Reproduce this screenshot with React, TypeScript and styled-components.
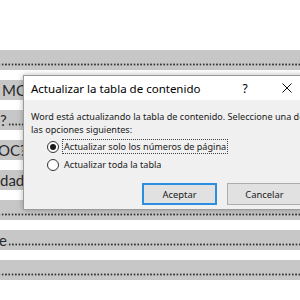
import React from "react";
import styled, { createGlobalStyle } from "styled-components";

const GlobalStyle = createGlobalStyle`
  html, body { margin: 0; padding: 0; background: #ffffff; }
  body { width: 300px; height: 300px; overflow: hidden; }
`;

const Page = styled.div`
  position: relative;
  width: 300px;
  height: 300px;
  overflow: hidden;
  background: #ffffff;
  box-sizing: border-box;
  padding-top: 50px;
  display: flex;
  flex-direction: column;
  gap: 10px;
`;

const Band = styled.div`
  height: 20px;
  background: #c7c7c7;
  display: flex;
  align-items: flex-end;
  overflow: hidden;
  white-space: nowrap;
`;

const DocText = styled.span<{ $shift: number }>`
  font-family: Lato, "Liberation Sans", sans-serif;
  font-size: 15px;
  line-height: 20px;
  color: #2a2a2a;
  margin-left: ${(p) => p.$shift}px;
  flex: none;
`;

const Leader = styled.span`
  flex: 1;
  align-self: stretch;
  background-image: radial-gradient(circle, #333 0.9px, transparent 1.2px);
  background-size: 3.3px 3px;
  background-repeat: repeat-x;
  background-position: 1px 13px;
`;

const Dialog = styled.div`
  position: absolute;
  left: 23px;
  top: 75px;
  width: 286px;
  height: 135px;
  box-sizing: border-box;
  background: #f0f0f0;
  border: 1px solid #9a9a9a;
  box-shadow: 0 0 6px rgba(0, 0, 0, 0.28);
  display: flex;
  flex-direction: column;
  font-family: "Noto Sans", "Open Sans", sans-serif;
  color: #1a1a1a;
`;

const TitleBar = styled.div`
  height: 24px;
  background: #ffffff;
  display: flex;
  align-items: center;
  padding-left: 7px;
`;

const Title = styled.div`
  flex: 1;
  font-size: 11.5px;
  color: #000;
  white-space: nowrap;
`;

const CaptionButton = styled.div`
  width: 42px;
  height: 24px;
  display: flex;
  align-items: center;
  justify-content: center;
  font-size: 12px;
  color: #000;
`;

const Body = styled.div`
  flex: 1;
  padding: 10px 0 0 7px;
  display: flex;
  flex-direction: column;
`;

const Message = styled.div`
  font-size: 9.1px;
  line-height: 13px;
  white-space: nowrap;
  color: #1a1a1a;
`;

const Options = styled.div`
  margin-top: 4px;
  padding-left: 16px;
  display: flex;
  flex-direction: column;
  gap: 5px;
`;

const Option = styled.label`
  display: flex;
  align-items: center;
  gap: 4px;
  height: 13px;
  font-size: 9.1px;
  white-space: nowrap;
`;

const Radio = styled.span<{ $checked?: boolean }>`
  width: 12px;
  height: 12px;
  box-sizing: border-box;
  border-radius: 50%;
  border: 1px solid #333;
  background: #fff;
  display: flex;
  align-items: center;
  justify-content: center;
  &::after {
    content: "";
    width: 6px;
    height: 6px;
    border-radius: 50%;
    background: ${(p) => (p.$checked ? "#1a1a1a" : "transparent")};
  }
`;

const Label = styled.span<{ $focused?: boolean }>`
  padding: 0 1px;
  line-height: 13px;
  outline: ${(p) => (p.$focused ? "1px dotted #444" : "none")};
`;

const Buttons = styled.div`
  margin-top: auto;
  margin-bottom: 4px;
  padding-right: 6px;
  display: flex;
  justify-content: flex-end;
  gap: 10px;
`;

const Button = styled.div<{ $primary?: boolean }>`
  width: 75px;
  height: 22px;
  box-sizing: border-box;
  background: #e1e1e1;
  border: ${(p) => (p.$primary ? "2px solid #2d8ee0" : "1px solid #adadad")};
  display: flex;
  align-items: center;
  justify-content: center;
  font-size: 9.4px;
  color: #1a1a1a;
`;

const rows: { text?: string; shift: number; leader: boolean }[] = [
  { shift: 0, leader: true },
  { text: "MC", shift: 2, leader: false },
  { text: "? ", shift: 0, leader: true },
  { text: "OC?", shift: -2, leader: false },
  { text: "dad", shift: 0, leader: false },
  { shift: 0, leader: true },
  { text: "e", shift: -1, leader: true },
  { shift: 0, leader: true },
];

export default function App() {
  return (
    <>
      <GlobalStyle />
      <Page>
        {rows.map((r, i) => (
          <Band key={i}>
            {r.text && <DocText $shift={r.shift}>{r.text}</DocText>}
            {r.leader && <Leader />}
          </Band>
        ))}
        <Dialog>
          <TitleBar>
            <Title>Actualizar la tabla de contenido</Title>
            <CaptionButton>?</CaptionButton>
            <CaptionButton>
              <svg width="10" height="10" viewBox="0 0 10 10">
                <path d="M0.5 0.5 L9.5 9.5 M9.5 0.5 L0.5 9.5" stroke="#111" strokeWidth="1" />
              </svg>
            </CaptionButton>
          </TitleBar>
          <Body>
            <Message>Word está actualizando la tabla de contenido. Seleccione una de</Message>
            <Message>las opciones siguientes:</Message>
            <Options>
              <Option>
                <Radio $checked />
                <Label $focused>Actualizar solo los números de página</Label>
              </Option>
              <Option>
                <Radio />
                <Label>Actualizar toda la tabla</Label>
              </Option>
            </Options>
            <Buttons>
              <Button $primary>Aceptar</Button>
              <Button>Cancelar</Button>
            </Buttons>
          </Body>
        </Dialog>
      </Page>
    </>
  );
}
